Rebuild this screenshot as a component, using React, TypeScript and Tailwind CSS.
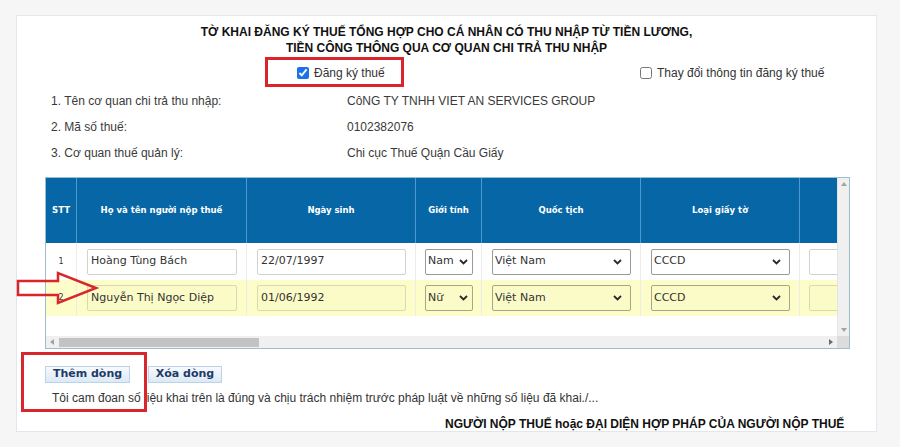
import React from "react";

const Chevron = () => (
  <svg width="9" height="6" viewBox="0 0 9 6" className="shrink-0">
    <polyline points="1,1 4.5,4.5 8,1" fill="none" stroke="#2a2a2a" strokeWidth="1.8" />
  </svg>
);

const TInput = ({ v, w, y }: { v: string; w: string; y: boolean }) => (
  <div
    className={`${w} h-[26px] rounded-[2px] border flex items-center px-[3px] text-[11px] text-[#333] whitespace-nowrap overflow-hidden ${
      y ? "bg-[#fbfbc8] border-[#d8d8b4]" : "bg-white border-[#d2d2d2]"
    }`}
  >
    {v}
  </div>
);

const TSelect = ({ v, w, y, pr }: { v: string; w: string; y: boolean; pr: string }) => (
  <div
    className={`${w} ${pr} h-[26px] rounded-[2px] border flex items-center justify-between pl-[2px] text-[11px] text-[#333] whitespace-nowrap overflow-hidden ${
      y ? "bg-[#fbfbc8] border-[#a6a68a]" : "bg-white border-[#9a9a9a]"
    }`}
  >
    <span>{v}</span>
    <Chevron />
  </div>
);

const Row = ({
  n,
  name,
  dob,
  sex,
  yellow,
  h,
}: {
  n: string;
  name: string;
  dob: string;
  sex: string;
  yellow: boolean;
  h: string;
}) => (
  <div className={`flex ${h} ${yellow ? "bg-[#fdfdca]" : "bg-white"}`}>
    <div className="w-[31px] shrink-0 flex items-center justify-center text-[8px] text-[#333] border-r border-[#ececec]">
      {n}
    </div>
    <div className="w-[170px] shrink-0 flex items-center pl-[10px] border-r border-[#ececec]">
      <TInput v={name} w="w-[150px]" y={yellow} />
    </div>
    <div className="w-[169px] shrink-0 flex items-center pl-[10px] border-r border-[#ececec]">
      <TInput v={dob} w="w-[149px]" y={yellow} />
    </div>
    <div className="w-[66px] shrink-0 flex items-center pl-[9px] border-r border-[#ececec]">
      <TSelect v={sex} w="w-[48px]" y={yellow} pr="pr-[4px]" />
    </div>
    <div className="w-[159px] shrink-0 flex items-center pl-[10px] border-r border-[#ececec]">
      <TSelect v="Việt Nam" w="w-[139px]" y={yellow} pr="pr-[8px]" />
    </div>
    <div className="w-[159px] shrink-0 flex items-center pl-[10px] border-r border-[#ececec]">
      <TSelect v="CCCD" w="w-[139px]" y={yellow} pr="pr-[8px]" />
    </div>
    <div className="w-[60px] shrink-0 flex items-center pl-[9px]">
      <TInput v="" w="w-[60px]" y={yellow} />
    </div>
  </div>
);

const headCls =
  "shrink-0 flex items-center justify-center text-center text-white font-bold text-[8.5px] border-r border-[#4b9bd1]";

export default function App() {
  return (
    <div className="w-[900px] h-[447px] bg-[#f6f6f6] overflow-hidden relative font-['Liberation_Sans',Arial,sans-serif]">
      <div className="ml-[16px] mt-[15px] w-[861px] h-[417px] bg-white border border-[#e2e7ed] overflow-hidden">
        {/* Title */}
        <div className="pt-[8px] text-center font-bold text-[12px] leading-[16px] text-[#111]">
          <div>TỜ KHAI ĐĂNG KÝ THUẾ TỔNG HỢP CHO CÁ NHÂN CÓ THU NHẬP TỪ TIỀN LƯƠNG,</div>
          <div>TIỀN CÔNG THÔNG QUA CƠ QUAN CHI TRẢ THU NHẬP</div>
        </div>

        {/* Checkbox row */}
        <div className="flex items-center h-[32px] text-[12px] text-[#333]">
          <div className="ml-[248px] w-[139px] h-[30px] border-[3px] border-[#d9262c] flex items-center pl-[29px] pt-[2px] gap-[5px]">
            <input type="checkbox" checked readOnly className="w-[12px] h-[12px] m-0 accent-[#1a73e8]" />
            <span>Đăng ký thuế</span>
          </div>
          <div className="ml-[236px] flex items-center pt-[2px] gap-[5px]">
            <input type="checkbox" readOnly checked={false} className="w-[12px] h-[12px] m-0" />
            <span>Thay đổi thông tin đăng ký thuế</span>
          </div>
        </div>

        {/* Info rows */}
        <div className="text-[12px] text-[#3a3a3a]">
          {[
            ["1. Tên cơ quan chi trả thu nhập:", "CôNG TY TNHH VIET AN SERVICES GROUP"],
            ["2. Mã số thuế:", "0102382076"],
            ["3. Cơ quan thuế quản lý:", "Chi cục Thuế Quận Cầu Giấy"],
          ].map(([a, b]) => (
            <div key={a} className="flex items-center h-[26px]">
              <div className="ml-[34px] w-[296px]">{a}</div>
              <div>{b}</div>
            </div>
          ))}
        </div>

        {/* Table */}
        <div className="ml-[28px] mt-[11px] w-[805px] h-[172px] border border-[#9bbdd4] flex flex-col font-['DejaVu_Sans',Tahoma,sans-serif]">
          <div className="flex h-[158px]">
            <div className="w-[791px] overflow-hidden flex flex-col">
              <div className="flex h-[65px] bg-[#0767a6]">
                <div className={`${headCls} w-[31px]`}>STT</div>
                <div className={`${headCls} w-[170px]`}>Họ và tên người nộp thuế</div>
                <div className={`${headCls} w-[169px]`}>Ngày sinh</div>
                <div className={`${headCls} w-[66px]`}>Giới tính</div>
                <div className={`${headCls} w-[159px]`}>Quốc tịch</div>
                <div className={`${headCls} w-[159px]`}>Loại giấy tờ</div>
                <div className={`${headCls} w-[60px] border-r-0`}></div>
              </div>
              <Row n="1" name="Hoàng Tùng Bách" dob="22/07/1997" sex="Nam" yellow={false} h="h-[37px]" />
              <Row n="2" name="Nguyễn Thị Ngọc Diệp" dob="01/06/1992" sex="Nữ" yellow={true} h="h-[36px]" />
              <div className="flex-1 bg-white"></div>
            </div>
            {/* vertical scrollbar */}
            <div className="w-[12px] bg-[#f0f0f0] flex flex-col items-center justify-between py-[4px] border-l border-[#e4e4e4]">
              <svg width="6" height="4" viewBox="0 0 6 4">
                <polygon points="0,4 3,0 6,4" fill="#a3a3a3" />
              </svg>
              <svg width="6" height="4" viewBox="0 0 6 4">
                <polygon points="0,0 6,0 3,4" fill="#a3a3a3" />
              </svg>
            </div>
          </div>
          {/* horizontal scrollbar */}
          <div className="flex h-[12px]">
            <div className="w-[791px] bg-[#f0f0f0] flex items-center px-[4px]">
              <svg width="4" height="6" viewBox="0 0 4 6">
                <polygon points="4,0 0,3 4,6" fill="#a3a3a3" />
              </svg>
              <div className="ml-[5px] w-[200px] h-[9px] bg-[#c3c3c3]"></div>
              <div className="flex-1"></div>
              <svg width="4" height="6" viewBox="0 0 4 6">
                <polygon points="0,0 4,3 0,6" fill="#6b6b6b" />
              </svg>
            </div>
            <div className="w-[12px] bg-[#dcdcdc]"></div>
          </div>
        </div>

        {/* Buttons */}
        <div className="flex mt-[17px] ml-[28px] gap-[18px] font-['DejaVu_Sans',Tahoma,sans-serif]">
          <div className="w-[85px] h-[17px] flex items-center justify-center text-[11px] font-bold text-[#1d3b69] bg-gradient-to-b from-[#f7fafd] to-[#dce9f6] border border-[#bcd2e8]">
            Thêm dòng
          </div>
          <div className="w-[74px] h-[17px] flex items-center justify-center text-[11px] font-bold text-[#1d3b69] bg-gradient-to-b from-[#f7fafd] to-[#dce9f6] border border-[#bcd2e8]">
            Xóa dòng
          </div>
        </div>

        <div className="mt-[6px] ml-[35px] h-[18px] flex items-center text-[12px] text-[#333]">
          Tôi cam đoan số liệu khai trên là đúng và chịu trách nhiệm trước pháp luật về những số liệu đã khai./...
        </div>

        <div className="flex mt-[10px] h-[14px] items-center">
          <div className="ml-[428px] font-bold text-[12px] text-[#111] whitespace-nowrap">
            NGƯỜI NỘP THUẾ hoặc ĐẠI DIỆN HỢP PHÁP CỦA NGƯỜI NỘP THUẾ
          </div>
        </div>
        <div className="flex h-[20px]">
          <div className="ml-[111px] w-[117px] border-l border-[#e0e0e0]"></div>
          <div className="w-[300px] border-l border-[#e0e0e0]"></div>
        </div>
      </div>

      {/* Annotations */}
      <div className="absolute left-[21px] top-[352px] w-[126px] h-[60px] border-[3px] border-[#d9262c]"></div>
      <svg className="absolute left-0 top-0" width="110" height="320" viewBox="0 0 110 320" style={{ pointerEvents: "none" }}>
        <polygon
          points="18,281 58,281 58,273 96,288 58,303 58,295 18,295"
          fill="none"
          stroke="#d9262c"
          strokeWidth="2.5"
          strokeLinejoin="miter"
        />
      </svg>
    </div>
  );
}
